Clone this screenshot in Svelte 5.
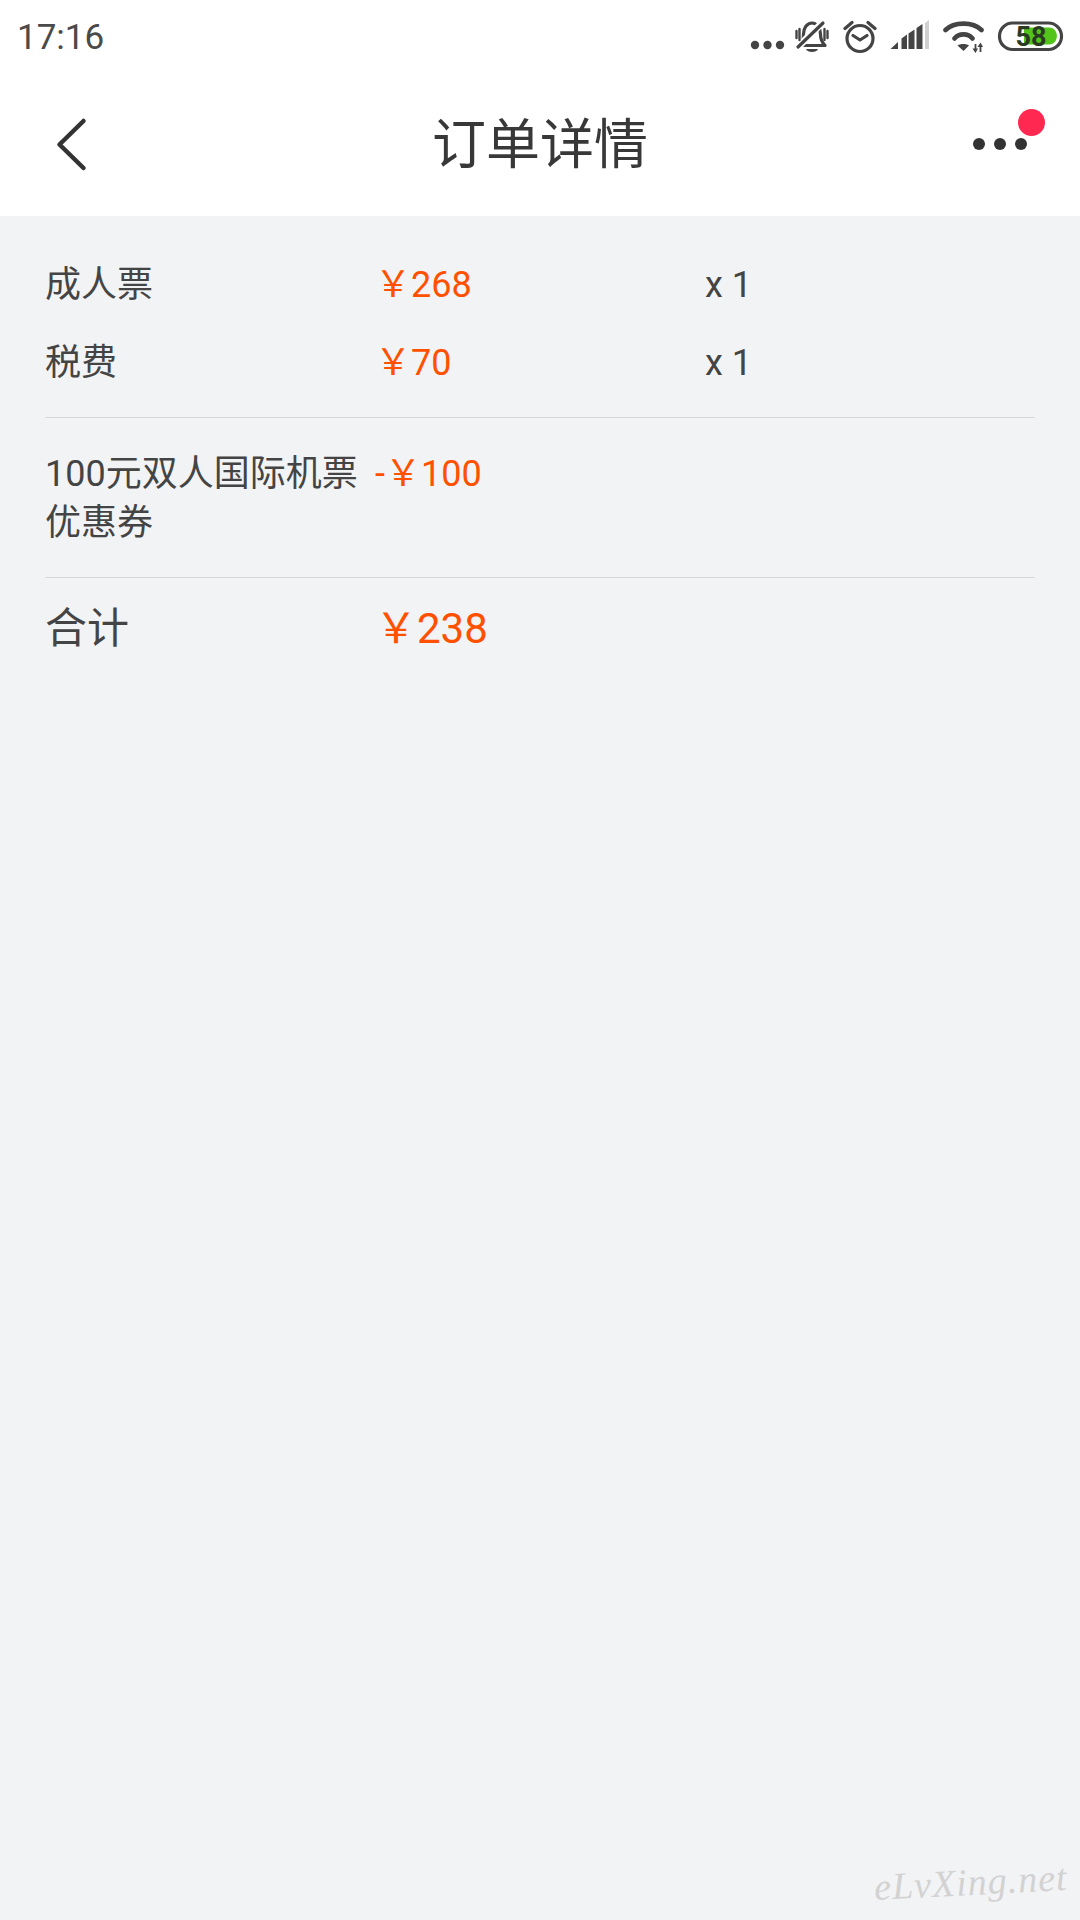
<script>
  const rows = [
    { name: '成人票', price: '￥268', qty: 'x 1' },
    { name: '税费', price: '￥70', qty: 'x 1' }
  ];
</script>

<div class="page">
  <header class="status">
    <span class="time">17:16</span>
    <div class="icons">
      <svg class="i-dots" width="35" height="34" viewBox="0 0 35 34">
        <circle cx="5" cy="25" r="4.2" /><circle cx="17.5" cy="25" r="4.2" /><circle cx="30" cy="25" r="4.2" />
      </svg>
      <svg class="i-bell" width="34" height="34" viewBox="0 0 34 34">
        <path class="line" d="M5 25.5C8.5 22 8.5 18 8.5 14C8.5 8 12 3 17 3C22 3 25.5 8 25.5 14C25.5 18 26.5 22 30 25.5Z" />
        <path class="halo" d="M29 1L3 27" />
        <path class="line" d="M28 3L3 27" />
        <path class="line thin" d="M1.5 11V18M4.5 9V20M29.5 9V20M32.5 11V18" />
        <path d="M11 29H23C22 33 12 33 11 29Z" />
      </svg>
      <svg class="i-alarm" width="34" height="34" viewBox="0 0 34 34">
        <circle class="line" cx="17" cy="18.5" r="13" />
        <path class="line" d="M10 15.5L17 20L24 15.5M2 8.5L9 2.5M25 2.5L32 8.5" />
      </svg>
      <svg class="i-signal" width="39" height="34" viewBox="0 0 39 34">
        <path d="M0.5 29L8 22V29ZM11.5 18.5L17 14.5V29H11.5ZM18.5 13.5L24.5 9.5V29H18.5ZM26.5 8L32.5 4V29H26.5Z" />
        <path class="dim" d="M35 3L39 0V29H35Z" />
      </svg>
      <svg class="i-wifi" width="42" height="34" viewBox="0 0 42 34">
        <path class="line wide" d="M2.5 10C11 1.5 30 1.5 38.5 10M11.5 18.5C16 13 25 13 29.5 18.5" />
        <path d="M14.5 25.5C17 23.5 23.500 23.500 26 25.5L20.5 31Z" />
        <path d="M29.5 28.5H35L32.5 33ZM34.5 27H40L37.5 22.5Z" />
        <path class="line hair" d="M32.5 24V30M37.5 26V32" />
      </svg>
      <svg class="i-battery" width="67" height="34" viewBox="0 0 67 34">
        <rect class="line" x="2.5" y="3" width="62" height="26.5" rx="13" />
        <path class="green" d="M27 7.5H52C62.5 7.5 62.5 24.500 52 24.500H27Z" />
        <text x="34" y="25.5" text-anchor="middle">58</text>
      </svg>
    </div>
  </header>

  <nav class="bar">
    <div class="back">
      <svg width="34" height="56" viewBox="0 0 34 56">
        <path d="M28.5 5L4.5 28.5L28.5 52" />
      </svg>
    </div>
    <h1>订单详情</h1>
    <div class="more">
      <span class="dot"></span><span class="dot"></span><span class="dot"></span>
      <span class="badge"></span>
    </div>
  </nav>

  <main class="content">
    <section class="group first">
      {#each rows as r}
        <div class="row">
          <span>{r.name}</span>
          <span class="price">{r.price}</span>
          <span>{r.qty}</span>
        </div>
      {/each}
    </section>
    <section class="group coupon">
      <div class="row tall">
        <span class="name">100元双人国际机票优惠券</span>
        <span class="price">-￥100</span>
        <span></span>
      </div>
    </section>
    <section class="total">
      <div class="row big">
        <span>合计</span>
        <span class="price">￥238</span>
        <span></span>
      </div>
    </section>
  </main>

  <div class="mark">eLvXing.net</div>
</div>

<style>
  :global(body) {
    margin: 0;
    background: #f2f3f5;
  }
  .page {
    position: relative;
    width: 1080px;
    height: 1920px;
    overflow: hidden;
    background: #f2f3f5;
    color: #444;
    font-family: Roboto, "Noto Sans CJK SC", sans-serif;
  }
  .status {
    display: flex;
    justify-content: space-between;
    height: 72px;
    padding: 0 16px 0 17px;
    background: #fff;
    box-sizing: border-box;
  }
  .time {
    font-size: 35px;
    line-height: 76px;
    color: #4a4a4a;
  }
  .icons {
    display: flex;
    padding-top: 20px;
  }
  .icons svg {
    fill: #444;
  }
  .line {
    fill: none;
    stroke: #444;
    stroke-width: 3.2;
    stroke-linecap: round;
    stroke-linejoin: round;
  }
  .halo {
    fill: none;
    stroke: #fff;
    stroke-width: 7;
  }
  .thin { stroke-width: 2.4; }
  .wide { stroke-width: 4.6; }
  .hair { stroke-width: 1.8; stroke-linecap: butt; }
  .icons .dim { fill: #d0d0d0; }
  .icons .green { fill: #52c41a; }
  .i-bell { margin-left: 10px; }
  .i-alarm { margin-left: 14px; }
  .i-signal { margin-left: 13px; }
  .i-wifi { margin-left: 14px; }
  .i-battery { margin-left: 12px; }
  .i-battery text {
    font-family: Roboto, sans-serif;
    font-size: 27px;
    font-weight: 700;
    fill: #2b3a22;
  }
  .bar {
    display: grid;
    grid-template-columns: 1fr auto 1fr;
    align-items: center;
    height: 144px;
    background: #fff;
  }
  .back {
    padding-left: 55px;
    display: flex;
  }
  .back path {
    fill: none;
    stroke: #333;
    stroke-width: 4.5;
    stroke-linecap: round;
    stroke-linejoin: round;
  }
  h1 {
    margin: 4px 0 0;
    font-size: 54px;
    font-weight: 400;
    line-height: 72px;
    color: #383838;
  }
  .more {
    position: relative;
    display: flex;
    justify-content: flex-end;
    gap: 9px;
    padding-right: 53px;
  }
  .dot {
    width: 12px;
    height: 12px;
    border-radius: 50%;
    background: #333;
  }
  .badge {
    position: absolute;
    right: 35px;
    top: -29px;
    width: 27px;
    height: 27px;
    border-radius: 50%;
    background: #ff2851;
  }
  .content {
    padding: 30px 45px 0;
  }
  .group {
    border-bottom: 1px solid #d6d7d9;
  }
  .first { padding-bottom: 15px; }
  .coupon { padding: 32px 0 29px; }
  .total { padding-top: 26px; }
  .row {
    display: grid;
    grid-template-columns: 330px 330px 1fr;
    font-size: 36px;
    line-height: 78px;
  }
  .name { padding-right: 15px; }
  .tall { line-height: 49px; }
  .big {
    font-size: 42px;
    line-height: 50px;
  }
  .price { color: #ff5000; }
  .mark {
    position: absolute;
    right: 12px;
    bottom: 16px;
    font-family: "Liberation Serif", serif;
    font-style: italic;
    font-size: 38px;
    letter-spacing: 1px;
    color: #d2d2d2;
    transform: rotate(-3deg);
  }
</style>
